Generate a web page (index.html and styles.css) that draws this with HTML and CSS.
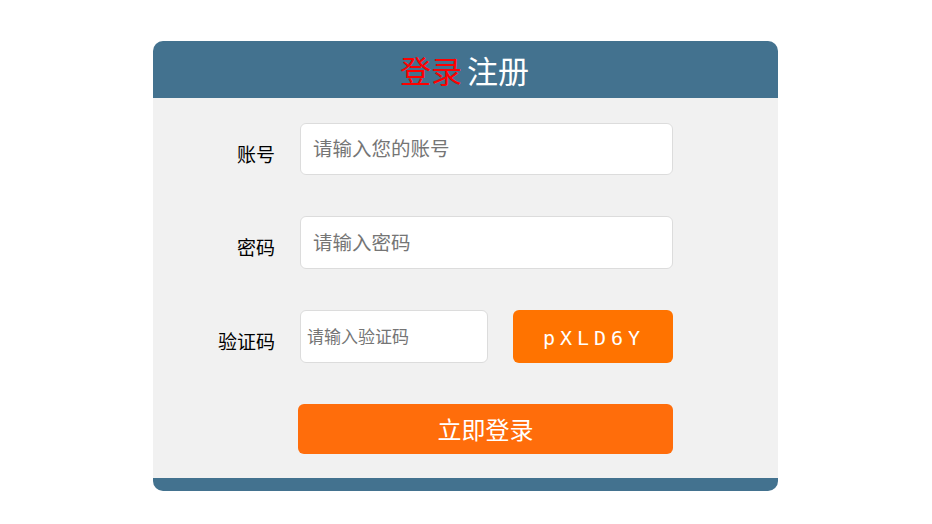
FILE: index.html
```html
<!DOCTYPE html>
<html lang="zh">
<head>
<meta charset="utf-8">
<title>登录</title>
<link rel="stylesheet" href="styles.css">
</head>
<body>
<div class="card">
  <div class="header"><span class="active">登录</span> <span class="other">注册</span></div>
  <form class="body">
    <div class="row row-first">
      <label class="label">账号</label>
      <input class="input" type="text" placeholder="请输入您的账号">
    </div>
    <div class="row">
      <label class="label">密码</label>
      <input class="input" type="password" placeholder="请输入密码">
    </div>
    <div class="row">
      <label class="label">验证码</label>
      <input class="input code-input" type="text" placeholder="请输入验证码">
      <div class="captcha">pXLD6Y</div>
    </div>
    <div class="row submit-row">
      <button class="submit" type="button">立即登录</button>
    </div>
  </form>
  <div class="footer"></div>
</div>
</body>
</html>
```
FILE: styles.css
```css
* { box-sizing: border-box; }
html, body { margin: 0; padding: 0; background: #fff; }
body {
  font-family: "Noto Sans CJK SC", "Noto Sans", sans-serif;
  padding-top: 41px;
}
.card {
  width: 625px;
  margin-left: 153px;
  border-radius: 10px;
  overflow: hidden;
  background: #f1f1f1;
}
.header {
  height: 57px;
  background: #43728f;
  text-align: center;
  font-size: 31px;
  line-height: 57px;
  color: #fff;
  word-spacing: -2px;
  padding-right: 2px;
}
.header .active { color: #ff0000; }
.body {
  padding: 25px 0 24px;
  margin: 0;
  display: flex;
  flex-direction: column;
  gap: 41px;
}
.row {
  display: flex;
  align-items: center;
  height: 53px;
}
.row-first { height: 52px; }
.label {
  width: 122px;
  margin-right: 25px;
  text-align: right;
  font-size: 19px;
  color: #000;
  padding-top: 8px;
}
.input {
  width: 373px;
  height: 100%;
  border: 1px solid #dcdcdc;
  border-radius: 6px;
  background: #fff;
  padding: 0 12px 3px;
  font-family: "Noto Sans CJK SC", "Noto Sans", sans-serif;
  font-size: 19.5px;
  outline: none;
}
.input::placeholder { color: #757575; }
.code-input {
  width: 188px;
  padding: 0 6px 2px;
  font-size: 17px;
}
.captcha {
  width: 160px;
  height: 100%;
  margin-left: 25px;
  border-radius: 6px;
  background: #ff7300;
  color: #fff;
  font-family: "DejaVu Sans Mono", monospace;
  font-size: 20px;
  letter-spacing: 5px;
  display: flex;
  align-items: center;
  justify-content: center;
  padding-top: 2px;
  padding-left: 2px;
}
.submit-row { height: 50px; }
.submit {
  margin-left: 145px;
  width: 375px;
  height: 50px;
  border: none;
  border-radius: 6px;
  background: #ff6d0b;
  color: #fff;
  font-family: "Noto Sans CJK SC", "Noto Sans", sans-serif;
  font-size: 24px;
  padding-bottom: 2px;
}
.footer {
  height: 13px;
  background: #43728f;
}
```
